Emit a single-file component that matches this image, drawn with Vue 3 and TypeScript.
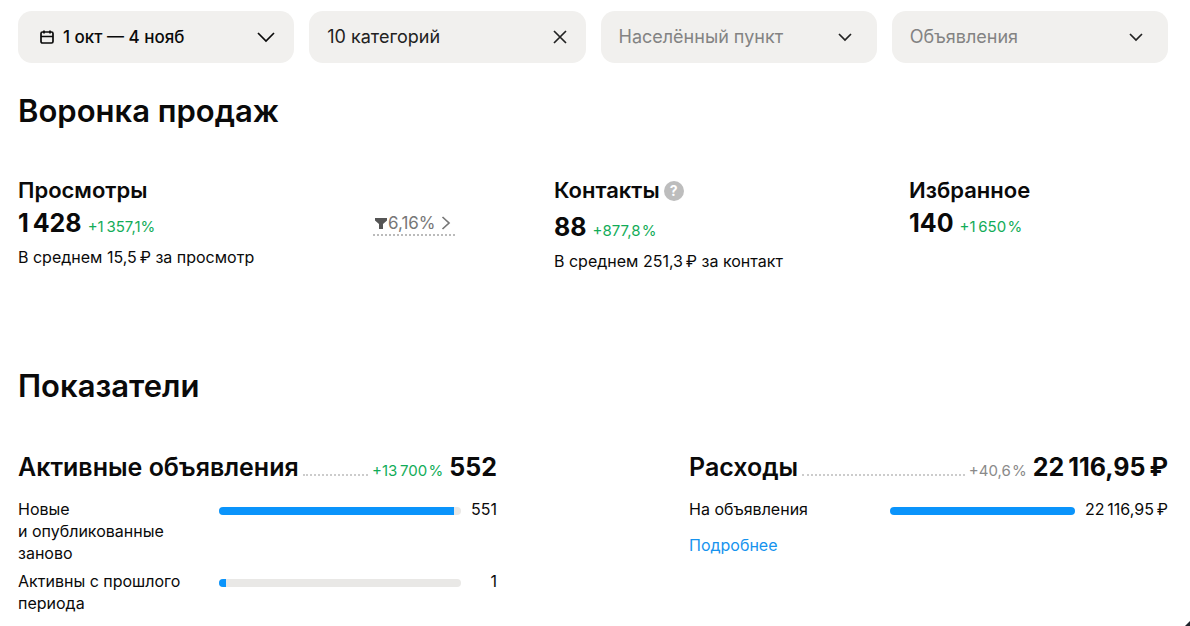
<script setup lang="ts">
import { ref } from 'vue'

interface Row {
  label: string
  value: string
  percent: number
}

interface Indicator {
  title: string
  delta: string
  positive: boolean
  total: string
  rows: Row[]
  more?: string
}

const location = ref('')
const listing = ref('')

const indicators: Indicator[] = [
  {
    title: 'Активные объявления',
    delta: '+13\u2009700\u200a%',
    positive: true,
    total: '552',
    rows: [
      { label: 'Новые\nи\u00a0опубликованные заново', value: '551', percent: 97 },
      { label: 'Активны с\u00a0прошлого периода', value: '1', percent: 3 },
    ],
  },
  {
    title: 'Расходы',
    delta: '+40,6\u200a%',
    positive: false,
    total: '22\u2009116,95\u2009₽',
    rows: [{ label: 'На объявления', value: '22\u2009116,95\u2009₽', percent: 100 }],
    more: 'Подробнее',
  },
]
</script>

<template>
  <main class="page">
    <div class="filters">
      <button type="button" class="filter date">
        <svg class="calendar" viewBox="0 0 16 16" aria-hidden="true">
          <rect x="2" y="3" width="12" height="11" rx="1.5" />
          <path d="M2 7.500h12M5 1.500v3M11 1.500v3" />
        </svg>
        <span class="filter-text">1 окт — 4 нояб</span>
        <svg class="chevron wide" viewBox="0 0 20 12" aria-hidden="true">
          <path d="M2 2l8 8 8-8" />
        </svg>
      </button>

      <div class="filter">
        <button type="button" class="plain filter-text">10 категорий</button>
        <button type="button" class="plain clear" aria-label="Сбросить категории">
          <svg viewBox="0 0 16 16" aria-hidden="true"><path d="M2 2l12 12M14 2L2 14" /></svg>
        </button>
      </div>

      <div class="filter select">
        <select v-model="location" aria-label="Населённый пункт">
          <option value="">Населённый пункт</option>
        </select>
        <svg class="chevron" viewBox="0 0 16 10" aria-hidden="true"><path d="M2 2l6 6 6-6" /></svg>
      </div>

      <div class="filter select">
        <select v-model="listing" aria-label="Объявления">
          <option value="">Объявления</option>
        </select>
        <svg class="chevron" viewBox="0 0 16 10" aria-hidden="true"><path d="M2 2l6 6 6-6" /></svg>
      </div>
    </div>

    <section>
      <h2>Воронка продаж</h2>
      <div class="funnel">
        <div class="metric">
          <h3>Просмотры</h3>
          <p class="figure"><strong>1&#8201;428</strong><span class="delta up">+1&#8201;357,1%</span></p>
          <p class="note">В среднем 15,5&#8201;₽ за просмотр</p>
        </div>

        <button type="button" class="plain conversion">
          <svg class="funnel-icon" viewBox="0 0 14 14" aria-hidden="true">
            <path d="M1 2h12v2.500L9 8v5H5V8L1 4.500z" />
          </svg>
          <span>6,16%</span>
          <svg class="next" viewBox="0 0 10 16" aria-hidden="true"><path d="M1.500 2l6.500 6-6.500 6" /></svg>
        </button>

        <div class="metric">
          <div class="title-line">
            <h3>Контакты</h3>
            <button type="button" class="plain help" aria-label="Подсказка">?</button>
          </div>
          <p class="figure"><strong>88</strong><span class="delta up">+877,8&#8202;%</span></p>
          <p class="note">В среднем 251,3&#8201;₽ за контакт</p>
        </div>

        <div class="metric">
          <h3>Избранное</h3>
          <p class="figure"><strong>140</strong><span class="delta up">+1&#8201;650&#8202;%</span></p>
        </div>
      </div>
    </section>

    <section>
      <h2>Показатели</h2>
      <div class="indicators">
        <article v-for="item in indicators" :key="item.title">
          <header class="summary">
            <h3>{{ item.title }}</h3>
            <span class="leader"></span>
            <span class="delta" :class="{ up: item.positive }">{{ item.delta }}</span>
            <strong>{{ item.total }}</strong>
          </header>
          <div v-for="row in item.rows" :key="row.label" class="row">
            <span class="label">{{ row.label }}</span>
            <div class="track"><div class="fill" :style="{ width: row.percent + '%' }"></div></div>
            <span class="value">{{ row.value }}</span>
          </div>
          <a v-if="item.more" href="#" class="more">{{ item.more }}</a>
        </article>
      </div>
    </section>

    <svg class="corner" viewBox="0 0 6 6" aria-hidden="true"><path d="M6 0v6H0z" /></svg>
  </main>
</template>

<style>
body {
  background: #fff;
}
</style>

<style scoped>
.page {
  padding: 11px 22px 12px 18px;
  color: #0a0a0a;
  font-family: Inter, "Noto Sans", sans-serif;
  font-size: 16px;
  line-height: 22px;
}

h2,
h3,
p {
  margin: 0;
}

button,
select {
  font: inherit;
  color: inherit;
}

.plain {
  padding: 0;
  border: 0;
  background: none;
  cursor: pointer;
}

svg {
  flex: none;
  fill: none;
  stroke: currentColor;
  stroke-width: 1.7;
}

.filters {
  display: grid;
  grid-template-columns: repeat(4, 1fr);
  gap: 15px;
}

.filter {
  display: flex;
  align-items: center;
  box-sizing: border-box;
  height: 52px;
  padding: 0 18px;
  border: 0;
  border-radius: 14px;
  background: #f1f0ee;
  color: #222;
  font-size: 18px;
  text-align: left;
}

.filter-text {
  flex: 1;
  text-align: left;
}

.date {
  padding: 0 18px 0 21px;
  gap: 8px;
  color: #0a0a0a;
  font-size: 17px;
  font-weight: 500;
}

.calendar {
  width: 16px;
  height: 16px;
}

.chevron {
  width: 16px;
  height: 10px;
}

.chevron.wide {
  width: 20px;
  height: 12px;
}

.clear,
.clear svg {
  display: block;
  width: 16px;
  height: 16px;
}

.select {
  position: relative;
  padding: 0;
}

.select select {
  width: 100%;
  height: 100%;
  padding: 0 48px 0 18px;
  border: 0;
  border-radius: 14px;
  appearance: none;
  background: none;
  color: #838383;
}

.select .chevron {
  position: absolute;
  right: 24px;
  pointer-events: none;
}

h2 {
  padding-top: 28px;
  font-size: 31px;
  font-weight: 600;
  line-height: 40px;
}

.funnel {
  display: grid;
  grid-template-columns: 355fr 181fr 355fr 259fr;
  align-items: start;
  min-height: 163px;
  padding-top: 44px;
}

h3 {
  font-size: 22px;
  font-weight: 600;
  line-height: 30px;
}

.title-line {
  display: flex;
  align-items: flex-start;
  gap: 4px;
  height: 34px;
}

.help {
  width: 20px;
  height: 20px;
  margin-top: 6px;
  border-radius: 50%;
  background: #bdbdbd;
  color: #fff;
  font-size: 14px;
  font-weight: 700;
  line-height: 20px;
}

.figure {
  display: flex;
  align-items: baseline;
  gap: 6px;
  line-height: 36px;
}

.figure strong,
.summary strong {
  font-size: 25px;
  font-weight: 700;
}

.delta {
  color: #8a8a8a;
  font-size: 15px;
}

.delta.up {
  color: #12ac58;
}

.note {
  line-height: 24px;
}

.conversion {
  display: flex;
  align-items: center;
  justify-self: start;
  margin-top: 37px;
  padding: 0 4px 0 1px;
  border-bottom: 2px dotted #bbb;
  color: #777;
  font-size: 17px;
}

.funnel-icon {
  width: 14px;
  height: 14px;
  fill: #555;
  stroke: none;
}

.next {
  width: 10px;
  height: 16px;
  margin-left: 5px;
}

.indicators {
  display: grid;
  grid-template-columns: 1fr 1fr;
  gap: 192px;
  padding-top: 41px;
}

.summary {
  display: flex;
  align-items: baseline;
  padding-bottom: 7px;
  line-height: 40px;
}

.summary h3 {
  font-size: 25px;
  line-height: 40px;
}

.leader {
  flex: 1;
  margin: 0 4px;
  border-bottom: 2px dotted #ccc;
}

.summary strong {
  margin-left: 6px;
}

.row {
  display: flex;
  align-items: flex-start;
  margin-bottom: 6px;
}

.label {
  box-sizing: border-box;
  width: 42%;
  padding-right: 24px;
  white-space: pre-line;
}

.track {
  flex: 1;
  height: 8px;
  margin-top: 9px;
  border-radius: 4px;
  background: #e9e8e6;
  overflow: hidden;
}

.fill {
  height: 100%;
  background: #0a94fb;
}

.value {
  min-width: 26px;
  margin-left: 10px;
  text-align: right;
}

.more {
  display: inline-block;
  margin-top: 8px;
  color: #1693ee;
  text-decoration: none;
}

.corner {
  position: fixed;
  right: 0;
  bottom: 0;
  width: 5px;
  height: 5px;
  fill: #20242c;
  stroke: none;
}
</style>
